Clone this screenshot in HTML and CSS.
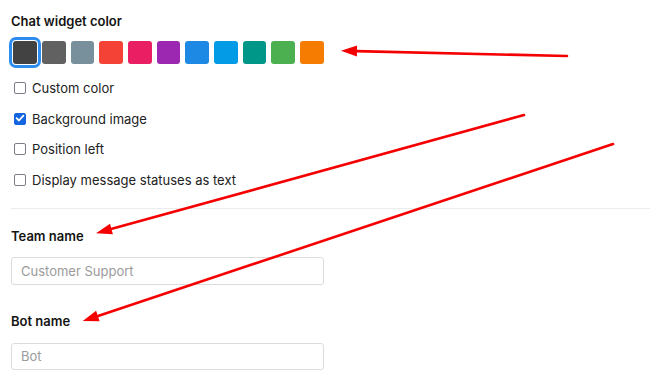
FILE: index.html
```html
<!DOCTYPE html>
<html lang="en">
<head>
    <meta charset="UTF-8">
    <title>Chat widget settings</title>
    <link rel="stylesheet" href="styles.css">
</head>
<body>
    <div class="settings">
        <h3 class="label first">Chat widget color</h3>
        <div class="swatches">
            <span class="swatch active" style="background:#424242"></span>
            <span class="swatch" style="background:#616161"></span>
            <span class="swatch" style="background:#78909c"></span>
            <span class="swatch" style="background:#f44336"></span>
            <span class="swatch" style="background:#e91e63"></span>
            <span class="swatch" style="background:#9c27b0"></span>
            <span class="swatch" style="background:#1e88e5"></span>
            <span class="swatch" style="background:#039be5"></span>
            <span class="swatch" style="background:#009688"></span>
            <span class="swatch" style="background:#4caf50"></span>
            <span class="swatch" style="background:#f57c00"></span>
        </div>
        <ul class="options">
            <li><span class="check"></span>Custom color</li>
            <li><span class="check on">
                <svg viewBox="0 0 12 12" width="12" height="12"><path d="M2.6 6.2 L5 8.5 L9.4 3.6" fill="none" stroke="#fff" stroke-width="1.8" stroke-linecap="round" stroke-linejoin="round"/></svg>
            </span>Background image</li>
            <li><span class="check"></span>Position left</li>
            <li><span class="check"></span>Display message statuses as text</li>
        </ul>
        <div class="divider"></div>
        <h3 class="label team">Team name</h3>
        <div class="field"><span class="placeholder">Customer Support</span></div>
        <h3 class="label bot">Bot name</h3>
        <div class="field short"><span class="placeholder">Bot</span></div>
    </div>

    <svg class="arrows" width="650" height="384" viewBox="0 0 650 384">
        <g stroke="#f50000" stroke-width="2.6" stroke-linecap="round" fill="none">
            <line x1="567" y1="56" x2="356" y2="51.1"/>
            <line x1="524" y1="115" x2="111" y2="229.1"/>
            <line x1="613" y1="144" x2="98" y2="316"/>
        </g>
        <g fill="#f50000">
            <polygon points="341,50.7 357.1,45.6 356.9,56.6"/>
            <polygon points="96,233.3 110,223.7 112.9,234.3"/>
            <polygon points="82.7,321 96.1,310.7 99.6,321.2"/>
        </g>
    </svg>
</body>
</html>
```

FILE: styles.css
```css
body {
    margin: 0;
    background: #fff;
    font-family: Inter, "Open Sans", sans-serif;
    color: #222;
    overflow: hidden;
}
.settings {
    padding-left: 11px;
    display: flex;
    flex-direction: column;
}
.label {
    margin: 0;
    font-size: 13px;
    font-weight: 600;
    line-height: 17px;
    color: #141414;
}
.label.first {
    margin-top: 13px;
}
.label.team {
    margin-top: 19.5px;
}
.label.bot {
    margin-top: 28.5px;
}
.swatches {
    display: flex;
    gap: 5px;
    margin: 10.5px 0 0 2.3px;
}
.swatch {
    width: 23.67px;
    height: 23.5px;
    border-radius: 3px;
}
.swatch.active {
    box-shadow: 0 0 0 1px #fff, 0 0 0 4px #2d8cf0;
}
.options {
    list-style: none;
    margin: 8.75px 0 0;
    padding: 0;
}
.options li {
    height: 30.5px;
    display: flex;
    align-items: center;
    font-size: 13px;
}
.check {
    width: 12px;
    height: 12px;
    box-sizing: border-box;
    border: 1.5px solid #7b7d88;
    border-radius: 2px;
    margin: 0 6px 0 3px;
    display: flex;
}
.check.on {
    background: #1565e0;
    border-color: #1565e0;
}
.check svg {
    margin: -1.5px;
}
.divider {
    margin-top: 12.75px;
    height: 1px;
    background: #ececec;
}
.field {
    margin-top: 11.5px;
    width: 313px;
    height: 28px;
    box-sizing: border-box;
    border: 1px solid #dcdcdc;
    border-radius: 3px;
    padding-left: 9px;
    display: flex;
    align-items: center;
}
.field.short {
    margin-top: 12.5px;
    height: 27px;
}
.placeholder {
    font-size: 13px;
    color: #9b9b9b;
}
.arrows {
    position: absolute;
    left: 0;
    top: 0;
    pointer-events: none;
}
```
